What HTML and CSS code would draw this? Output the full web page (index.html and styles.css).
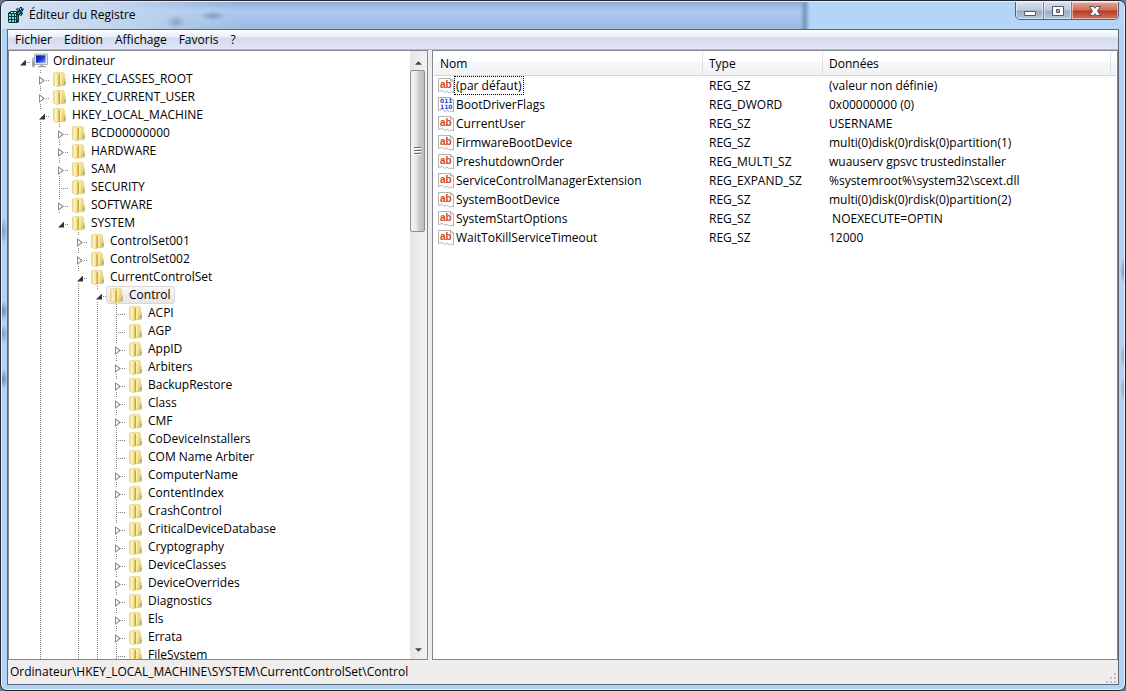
FILE: index.html
```
<!DOCTYPE html>
<html lang="fr">
<head>
  <meta charset="UTF-8">
  <meta name="viewport" content="width=device-width, initial-scale=1">
  <title>Éditeur du Registre</title>
  <link rel="stylesheet" href="styles.css">
</head>
<body>

  <!-- Icônes partagées -->
  <svg class="sprites" width="0" height="0" aria-hidden="true">
    <defs>
      <linearGradient id="folderFront" x1="0" x2="1" y1="0" y2="0">
        <stop offset="0" stop-color="#ead27a"/>
        <stop offset=".4" stop-color="#fdf6c4"/>
        <stop offset="1" stop-color="#eed679"/>
      </linearGradient>
      <linearGradient id="folderBack" x1="0" x2="1" y1="0" y2="1">
        <stop offset="0" stop-color="#fdf7ca"/>
        <stop offset="1" stop-color="#dfbf4c"/>
      </linearGradient>
      <linearGradient id="screen" x1="0" x2="1" y1="0" y2="1">
        <stop offset="0" stop-color="#0a12a0"/>
        <stop offset=".5" stop-color="#1a35d8"/>
        <stop offset="1" stop-color="#7fa6ff"/>
      </linearGradient>
    </defs>
    <symbol id="folder" viewBox="0 0 16 16">
      <path d="M6 1.500h6.500L13.500 3v4l1 1v6l-1 .7H6z" fill="url(#folderBack)" stroke="#e0c76e" stroke-width=".5"/>
      <path d="M2.500 2l4-.7L8 2.500v13l-1.500.2-4-1.400z" fill="url(#folderFront)" stroke="#dcc264" stroke-width=".5"/>
      <path d="M7.600 4l1.400-1.500v11.500L7.600 15.500z" fill="#c9a637"/>
      <path d="M9.200 3h1.300v10.500l-1.300.7z" fill="#fcf3b4"/>
      <path d="M14 10.500v3" stroke="#4aa3d8"/>
    </symbol>
    <symbol id="computer" viewBox="0 0 16 16">
      <path d="M.5 5.500l2-1v9l-2 .5z" fill="#d5d9dc" stroke="#8a9196" stroke-width=".6"/>
      <path d="M.7 8h1v5h-1z" fill="#4fb04a"/>
      <path d="M2.500 1h13v10.500h-13z" fill="#e3e6ea" stroke="#9aa0a8" stroke-width=".8"/>
      <path d="M4 2.300h9.500v7.500H4z" fill="url(#screen)"/>
      <path d="M8 11.500h3.500v1.500H8z" fill="#b1b6bb"/>
      <path d="M6 13h8v1.300H6z" fill="#9ea4aa"/>
    </symbol>
    <symbol id="page" viewBox="0 0 16 16">
      <path d="M.5.500h12l3 2.500v12l-2-1-2 1-2.500-2-2 1.500-2.500-2-4 1z" fill="#fff" stroke="#b4b4b4"/>
      <path d="M12.500.500v2.500h3" fill="none" stroke="#a9a9a9"/>
    </symbol>
  </svg>

  <div class="window">
    <header class="titlebar">
      <svg class="app-icon" viewBox="0 0 16 16" aria-hidden="true">
        <path d="M0 6l3-2h5l3 2v9l-2 1H1l-1-1z" fill="#08383c"/>
        <path d="M1 7h2v2H1zM4 7h2v2H4zM7 7h1v2H7zM1 10h2v2H1zM4 10h2v2H4zM7 10h1v2H7zM1 13h2v2H1zM4 13h2v2H4zM7 13h1v2H7z" fill="#6fe6e6"/>
        <path d="M3 5h2v1H3zM6 5h2v1H6z" fill="#d9ffff"/>
        <path d="M9 8l1-1v2l-1 1zM9 11l1-1v2l-1 1z" fill="#1f9a9a"/>
        <path d="M8 2l2-1 1 1 1-2h2v2l2-1-1 3-1 1 1 2-2 2-2-1-1 1-2-2 1-3z" fill="#0b2a30"/>
        <path d="M9 3l1-1 1 1-1 1zM12 1h1v2h-1zM13 4l1-1v1l-1 1zM10 6l2-1v1l-2 1zM12 7h1v1h-1z" fill="#7ff0f0"/>
      </svg>
      <h1>Éditeur du Registre</h1>
      <div class="caption-buttons">
        <button class="caption" aria-label="Réduire">
          <svg viewBox="0 0 14 12"><path d="M1.500 6.500h11v4h-11z" fill="#fff" stroke="#535666"/></svg>
        </button>
        <button class="caption" aria-label="Agrandir">
          <svg viewBox="0 0 14 12"><path d="M1.500 1.500h11v9h-11zM5.500 4.500h3v3h-3z" fill="#fff" fill-rule="evenodd" stroke="#535666"/></svg>
        </button>
        <button class="caption close" aria-label="Fermer">
          <svg viewBox="0 0 14 12"><path d="M1.500 1.500h4L7 3.300l1.500-1.800h4L9.500 6l3 4.500h-4L7 8.700l-1.500 1.800h-4L4.500 6z" fill="#fff" stroke="#535666"/></svg>
        </button>
      </div>
    </header>

    <div class="client">
      <nav class="menubar">
        <button>Fichier</button>
        <button>Edition</button>
        <button>Affichage</button>
        <button>Favoris</button>
        <button>?</button>
      </nav>

      <main class="panes">
        <!-- Arborescence des clés -->
        <section class="tree-pane" aria-label="Clés">
          <div class="tree-view">
          <ul class="tree">
            <li class="root"><div class="row"><button class="toggle open" aria-label="Réduire"></button><a class="key" href="#"><svg><use href="#computer"/></svg>Ordinateur</a></div>
              <ul>
                <li><div class="row"><button class="toggle" aria-label="Développer"></button><a class="key" href="#"><svg><use href="#folder"/></svg>HKEY_CLASSES_ROOT</a></div></li>
                <li><div class="row"><button class="toggle" aria-label="Développer"></button><a class="key" href="#"><svg><use href="#folder"/></svg>HKEY_CURRENT_USER</a></div></li>
                <li><div class="row"><button class="toggle open" aria-label="Réduire"></button><a class="key" href="#"><svg><use href="#folder"/></svg>HKEY_LOCAL_MACHINE</a></div>
                  <ul>
                    <li><div class="row"><button class="toggle" aria-label="Développer"></button><a class="key" href="#"><svg><use href="#folder"/></svg>BCD00000000</a></div></li>
                    <li><div class="row"><button class="toggle" aria-label="Développer"></button><a class="key" href="#"><svg><use href="#folder"/></svg>HARDWARE</a></div></li>
                    <li><div class="row"><button class="toggle" aria-label="Développer"></button><a class="key" href="#"><svg><use href="#folder"/></svg>SAM</a></div></li>
                    <li><div class="row leaf"><a class="key" href="#"><svg><use href="#folder"/></svg>SECURITY</a></div></li>
                    <li><div class="row"><button class="toggle" aria-label="Développer"></button><a class="key" href="#"><svg><use href="#folder"/></svg>SOFTWARE</a></div></li>
                    <li class="last"><div class="row"><button class="toggle open" aria-label="Réduire"></button><a class="key" href="#"><svg><use href="#folder"/></svg>SYSTEM</a></div>
                      <ul>
                        <li><div class="row"><button class="toggle" aria-label="Développer"></button><a class="key" href="#"><svg><use href="#folder"/></svg>ControlSet001</a></div></li>
                        <li><div class="row"><button class="toggle" aria-label="Développer"></button><a class="key" href="#"><svg><use href="#folder"/></svg>ControlSet002</a></div></li>
                        <li><div class="row"><button class="toggle open" aria-label="Réduire"></button><a class="key" href="#"><svg><use href="#folder"/></svg>CurrentControlSet</a></div>
                          <ul>
                            <li><div class="row"><button class="toggle open" aria-label="Réduire"></button><a class="key selected" href="#"><svg><use href="#folder"/></svg>Control</a></div>
                              <ul>
                                <li><div class="row leaf"><a class="key" href="#"><svg><use href="#folder"/></svg>ACPI</a></div></li>
                                <li><div class="row leaf"><a class="key" href="#"><svg><use href="#folder"/></svg>AGP</a></div></li>
                                <li><div class="row"><button class="toggle" aria-label="Développer"></button><a class="key" href="#"><svg><use href="#folder"/></svg>AppID</a></div></li>
                                <li><div class="row"><button class="toggle" aria-label="Développer"></button><a class="key" href="#"><svg><use href="#folder"/></svg>Arbiters</a></div></li>
                                <li><div class="row"><button class="toggle" aria-label="Développer"></button><a class="key" href="#"><svg><use href="#folder"/></svg>BackupRestore</a></div></li>
                                <li><div class="row"><button class="toggle" aria-label="Développer"></button><a class="key" href="#"><svg><use href="#folder"/></svg>Class</a></div></li>
                                <li><div class="row"><button class="toggle" aria-label="Développer"></button><a class="key" href="#"><svg><use href="#folder"/></svg>CMF</a></div></li>
                                <li><div class="row leaf"><a class="key" href="#"><svg><use href="#folder"/></svg>CoDeviceInstallers</a></div></li>
                                <li><div class="row leaf"><a class="key" href="#"><svg><use href="#folder"/></svg>COM Name Arbiter</a></div></li>
                                <li><div class="row"><button class="toggle" aria-label="Développer"></button><a class="key" href="#"><svg><use href="#folder"/></svg>ComputerName</a></div></li>
                                <li><div class="row"><button class="toggle" aria-label="Développer"></button><a class="key" href="#"><svg><use href="#folder"/></svg>ContentIndex</a></div></li>
                                <li><div class="row leaf"><a class="key" href="#"><svg><use href="#folder"/></svg>CrashControl</a></div></li>
                                <li><div class="row"><button class="toggle" aria-label="Développer"></button><a class="key" href="#"><svg><use href="#folder"/></svg>CriticalDeviceDatabase</a></div></li>
                                <li><div class="row"><button class="toggle" aria-label="Développer"></button><a class="key" href="#"><svg><use href="#folder"/></svg>Cryptography</a></div></li>
                                <li><div class="row"><button class="toggle" aria-label="Développer"></button><a class="key" href="#"><svg><use href="#folder"/></svg>DeviceClasses</a></div></li>
                                <li><div class="row"><button class="toggle" aria-label="Développer"></button><a class="key" href="#"><svg><use href="#folder"/></svg>DeviceOverrides</a></div></li>
                                <li><div class="row"><button class="toggle" aria-label="Développer"></button><a class="key" href="#"><svg><use href="#folder"/></svg>Diagnostics</a></div></li>
                                <li><div class="row"><button class="toggle" aria-label="Développer"></button><a class="key" href="#"><svg><use href="#folder"/></svg>Els</a></div></li>
                                <li><div class="row"><button class="toggle" aria-label="Développer"></button><a class="key" href="#"><svg><use href="#folder"/></svg>Errata</a></div></li>
                                <li><div class="row leaf"><a class="key" href="#"><svg><use href="#folder"/></svg>FileSystem</a></div></li>
                              </ul>
                            </li>
                          </ul>
                        </li>
                      </ul>
                    </li>
                  </ul>
                </li>
              </ul>
            </li>
          </ul>
          </div>
          <div class="scrollbar">
            <button class="arrow" aria-label="Défiler vers le haut"><svg viewBox="0 0 8 4"><path d="M0 4l4-4 4 4z" fill="#444"/></svg></button>
            <div class="thumb"><i></i><i></i><i></i></div>
            <button class="arrow down" aria-label="Défiler vers le bas"><svg viewBox="0 0 8 4"><path d="M0 0h8L4 4z" fill="#444"/></svg></button>
          </div>
        </section>

        <!-- Valeurs de la clé -->
        <section class="values-pane" aria-label="Valeurs">
          <table>
            <thead>
              <tr><th class="col-name">Nom</th><th class="col-type">Type</th><th>Données</th><th class="col-end"></th></tr>
            </thead>
            <tbody>
              <tr><td><svg viewBox="0 0 16 16"><use href="#page"/><text x="2" y="10" class="glyph-ab">ab</text></svg><span class="focused">(par défaut)</span></td><td>REG_SZ</td><td colspan="2">(valeur non définie)</td></tr>
              <tr><td><svg viewBox="0 0 16 16"><use href="#page"/><text x="2" y="6" class="glyph-bin">011</text><text x="2" y="12" class="glyph-bin">110</text></svg><span>BootDriverFlags</span></td><td>REG_DWORD</td><td colspan="2">0x00000000 (0)</td></tr>
              <tr><td><svg viewBox="0 0 16 16"><use href="#page"/><text x="2" y="10" class="glyph-ab">ab</text></svg><span>CurrentUser</span></td><td>REG_SZ</td><td colspan="2">USERNAME</td></tr>
              <tr><td><svg viewBox="0 0 16 16"><use href="#page"/><text x="2" y="10" class="glyph-ab">ab</text></svg><span>FirmwareBootDevice</span></td><td>REG_SZ</td><td colspan="2">multi(0)disk(0)rdisk(0)partition(1)</td></tr>
              <tr><td><svg viewBox="0 0 16 16"><use href="#page"/><text x="2" y="10" class="glyph-ab">ab</text></svg><span>PreshutdownOrder</span></td><td>REG_MULTI_SZ</td><td colspan="2">wuauserv gpsvc trustedinstaller</td></tr>
              <tr><td><svg viewBox="0 0 16 16"><use href="#page"/><text x="2" y="10" class="glyph-ab">ab</text></svg><span>ServiceControlManagerExtension</span></td><td>REG_EXPAND_SZ</td><td colspan="2">%systemroot%\system32\scext.dll</td></tr>
              <tr><td><svg viewBox="0 0 16 16"><use href="#page"/><text x="2" y="10" class="glyph-ab">ab</text></svg><span>SystemBootDevice</span></td><td>REG_SZ</td><td colspan="2">multi(0)disk(0)rdisk(0)partition(2)</td></tr>
              <tr><td><svg viewBox="0 0 16 16"><use href="#page"/><text x="2" y="10" class="glyph-ab">ab</text></svg><span>SystemStartOptions</span></td><td>REG_SZ</td><td colspan="2">&nbsp;NOEXECUTE=OPTIN</td></tr>
              <tr><td><svg viewBox="0 0 16 16"><use href="#page"/><text x="2" y="10" class="glyph-ab">ab</text></svg><span>WaitToKillServiceTimeout</span></td><td>REG_SZ</td><td colspan="2">12000</td></tr>
            </tbody>
          </table>
        </section>
      </main>

      <footer class="statusbar">
        <span>Ordinateur\HKEY_LOCAL_MACHINE\SYSTEM\CurrentControlSet\Control</span>
        <svg class="grip" viewBox="0 0 12 12" aria-hidden="true">
          <path d="M8 1h2v2H8zM8 5h2v2H8zM4 5h2v2H4zM8 9h2v2H8zM4 9h2v2H4zM0 9h2v2H0z" fill="#c4c0c0"/>
        </svg>
      </footer>
    </div>
  </div>

</body>
</html>
```
FILE: styles.css
```
/* Base */
* { margin: 0; padding: 0; box-sizing: border-box; }
body {
  height: 100vh;
  overflow: hidden;
  background: #6f7a80;
  font-family: "Open Sans", "Noto Sans", sans-serif;
  font-size: 12px;
  line-height: 18px;
  color: #000;
}
button { font: inherit; color: inherit; background: none; border: none; }
a { color: inherit; text-decoration: none; }
ul { list-style: none; }
.sprites { display: block; }

/* Fenêtre */
.window {
  display: flex;
  flex-direction: column;
  height: 100vh;
  padding: 0 6px 5px;
  border: 1px solid #23262e;
  border-radius: 7px;
  background:
    radial-gradient(5px 14px at 2px 230px, #7f9cc4, transparent),
    radial-gradient(5px 10px at 2px 310px, #6d87ad, transparent),
    radial-gradient(5px 10px at 2px 333px, #7f9cc4, transparent),
    radial-gradient(5px 10px at 2px 378px, #6d87ad, transparent),
    radial-gradient(5px 14px at 100% 270px, #6f8794, transparent),
    radial-gradient(5px 14px at 100% 355px, #93a878, transparent),
    radial-gradient(5px 14px at 100% 388px, #8c99a0, transparent),
    #b3d3f6;
  box-shadow: inset 0 0 0 1px #e4f1fd;
}

.titlebar {
  display: flex;
  flex: none;
  height: 28px;
  margin: 0 -5px;
  padding-left: 6px;
  border-top: 1px solid #e4f1fd;
  border-radius: 6px 6px 0 0;
  background:
    radial-gradient(14px 5px at 211px 14px, rgba(110,140,175,.7), transparent),
    radial-gradient(10px 7px at 174px 20px, rgba(110,140,175,.6), transparent),
    linear-gradient(90deg, #d5e4f5 0, #c3d6ee 110px, rgba(180,208,240,0) 240px),
    linear-gradient(90deg, transparent 798px, #7597bf 803px, #b4d5f8 808px),
    linear-gradient(#8faad3, #abcaf2 9px, #9dbae0);
}
.app-icon { width: 16px; height: 16px; margin-top: 5px; }
.titlebar h1 {
  flex: 1;
  padding: 4px 0 0 5px;
  font-size: 12px;
  font-weight: normal;
}
.caption-buttons {
  display: flex;
  height: 18px;
  margin-right: 5px;
  border: 1px solid #50617a;
  border-top: none;
  border-radius: 0 0 5px 5px;
  overflow: hidden;
}
.caption {
  display: flex;
  justify-content: center;
  align-items: center;
  width: 28px;
  border-right: 1px solid #6c7e98;
  background: linear-gradient(#d3dfed, #bccbdf 8px, #97abc6 9px, #b5cbe4);
  box-shadow: inset 0 0 0 1px rgba(255,255,255,.5);
}
.caption svg { width: 14px; height: 12px; }
.caption.close {
  width: 46px;
  border-right: none;
  background: linear-gradient(#e6a595, #d0705c 8px, #b93922 9px, #d5735a);
}

.client {
  display: flex;
  flex: 1;
  flex-direction: column;
  min-height: 0;
  border: 1px solid #5c6775;
  background: #f0eded;
}

/* Menu */
.menubar {
  display: flex;
  flex: none;
  height: 20px;
  padding-left: 1px;
  border-bottom: 1px solid #b1b8cc;
  background: linear-gradient(#fff, #e9edf6 7px, #d4dbed 8px, #dfe5f5);
}
.menubar button { padding: 0 6px; }

/* Panneaux */
.panes {
  display: flex;
  flex: 1;
  gap: 4px;
  min-height: 0;
}
.tree-pane {
  display: flex;
  flex: 0 0 420px;
  border: 1px solid #828790;
  background: #fff;
}
.values-pane {
  flex: 1;
  padding: 1px 1px 0;
  overflow: hidden;
  border: 1px solid #828790;
  background: #fff;
}

/* Arborescence */
.tree-view {
  flex: 1;
  padding: 1px 0 0 4px;
  overflow: hidden;
}
.tree ul { padding-left: 19px; }
.tree li { background: linear-gradient(#808080 50%, transparent 50%) 8px 0 / 1px 2px repeat-y; }
.tree li.root, .tree li.last { background: none; }
.row {
  display: flex;
  height: 18px;
  background: repeating-linear-gradient(90deg, #808080 0 1px, transparent 1px 2px) 10px 10px / 8px 1px no-repeat;
}
.row.leaf { padding-left: 17px; }
.toggle {
  width: 13px;
  height: 12px;
  margin: 3px 4px 3px 0;
  background: #fff;
}
.toggle::before {
  content: "";
  display: block;
  width: 6px;
  height: 9px;
  margin: 3px 0 0 7px;
  background: #8c8c8c;
  clip-path: polygon(evenodd, 0 0, 6px 50%, 0 100%, 0 0, 1px 2px, 1px 7px, 4px 50%, 1px 2px);
}
.toggle.open::before {
  height: 6px;
  background: #333;
  clip-path: polygon(100% 0, 100% 100%, 0 100%);
}
.key {
  display: flex;
  gap: 5px;
  padding: 0 3px 0 1px;
  border: 1px solid transparent;
  line-height: 16px;
  white-space: nowrap;
}
.key svg { width: 16px; height: 16px; }
.key.selected {
  border-color: #d9d9d9;
  border-radius: 3px;
  background: linear-gradient(#f8f8f8, #e6e6e6);
}

/* Barre de défilement */
.scrollbar {
  display: flex;
  flex: 0 0 17px;
  flex-direction: column;
  background: linear-gradient(90deg, #e6e6e6, #f2f2f2);
}
.arrow { height: 19px; padding-top: 4px; line-height: 0; }
.arrow.down { margin-top: auto; padding-top: 0; }
.arrow svg { width: 7px; height: 4px; }
.thumb {
  display: flex;
  flex-direction: column;
  justify-content: center;
  align-items: center;
  gap: 1px;
  width: 15px;
  height: 162px;
  border: 1px solid #8f8f8f;
  border-radius: 2px;
  background: linear-gradient(90deg, #f5f5f5, #e6e6e6 6px, #d0d0d0 7px, #bcbcbc);
}
.thumb i { width: 7px; height: 2px; background: #6a6a6a; border-bottom: 1px solid #fff; }

/* Table des valeurs */
table {
  width: 100%;
  table-layout: fixed;
  border-collapse: separate;
  border-spacing: 0;
  white-space: nowrap;
}
th {
  height: 24px;
  padding-left: 6px;
  border-right: 1px solid #e2e3e5;
  border-bottom: 1px solid #d5d5d5;
  background: linear-gradient(#fff 9px, #f7f8fa 10px, #f1f2f4);
  font-weight: normal;
  text-align: left;
}
.col-name { width: 269px; }
.col-type { width: 120px; }
.col-end { width: 5px; padding: 0; border-right: none; }
td { height: 19px; padding-left: 6px; }
td:first-child {
  display: flex;
  align-items: center;
  padding-left: 4px;
}
td svg { width: 16px; height: 16px; }
td span { padding: 0 1px; border: 1px solid transparent; line-height: 17px; }
td .focused { border: 1px dotted #000; }
.glyph-ab { font: bold 10px "Liberation Sans", sans-serif; fill: #d2451e; }
.glyph-bin { font: bold 6px "DejaVu Sans", sans-serif; fill: #2846d2; }

/* Barre d'état */
.statusbar {
  display: flex;
  flex: none;
  justify-content: space-between;
  align-items: flex-end;
  height: 24px;
  padding-left: 2px;
}
.statusbar span { align-self: center; }
.grip { width: 12px; height: 12px; }
```
